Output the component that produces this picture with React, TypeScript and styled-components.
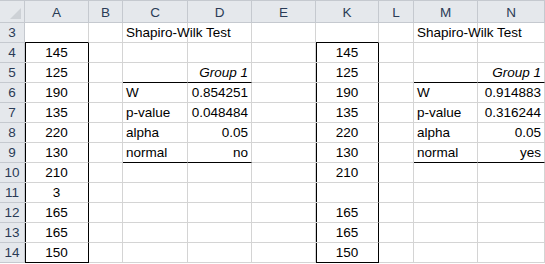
import React from 'react';
import styled, { createGlobalStyle } from 'styled-components';

const COLS = ['A', 'B', 'C', 'D', 'E', 'K', 'L', 'M', 'N'];
const WIDTHS = [25, 64, 34, 65, 64, 64, 63, 35, 64, 67];

type CellSpec = { text?: string; align?: 'left' | 'center' | 'right'; italic?: boolean };

const colA = ['145', '125', '190', '135', '220', '130', '210', '3', '165', '165', '150'];
const colK = ['145', '125', '190', '135', '220', '130', '210', '', '165', '165', '150'];

const leftTable: Record<number, [string, string]> = {
    3: ['Shapiro-Wilk Test', ''],
    5: ['', 'Group 1'],
    6: ['W', '0.854251'],
    7: ['p-value', '0.048484'],
    8: ['alpha', '0.05'],
    9: ['normal', 'no'],
};

const rightTable: Record<number, [string, string]> = {
    3: ['Shapiro-Wilk Test', ''],
    5: ['', 'Group 1'],
    6: ['W', '0.914883'],
    7: ['p-value', '0.316244'],
    8: ['alpha', '0.05'],
    9: ['normal', 'yes'],
};

const ROWS = [3, 4, 5, 6, 7, 8, 9, 10, 11, 12, 13, 14];

function cellFor(col: string, row: number): CellSpec {
    const idx = row - 4;
    if (col === 'A' && idx >= 0) return { text: colA[idx], align: 'center' };
    if (col === 'K' && idx >= 0) return { text: colK[idx], align: 'center' };
    const table = col === 'C' || col === 'D' ? leftTable : col === 'M' || col === 'N' ? rightTable : null;
    if (table && table[row]) {
        const isLabel = col === 'C' || col === 'M';
        const text = table[row][isLabel ? 0 : 1];
        if (!text) return {};
        if (row === 5) return { text, align: 'right', italic: true };
        return { text, align: isLabel ? 'left' : 'right' };
    }
    return {};
}

// black borders drawn over the grid
function edges(col: string, row: number) {
    const boxed = (col === 'A' || col === 'K') && row >= 4;
    const table = ['C', 'D', 'M', 'N'].includes(col);
    return {
        $boxLeft: boxed,
        $boxRight: boxed,
        $black: (boxed && row === 14) || ((col === 'A' || col === 'K') && row === 3) || (table && (row === 5 || row === 9)),
    };
}

function App() {
    return (
        <>
            <GlobalStyle />
            <Sheet>
                <Corner>
                    <CornerMark />
                </Corner>
                {COLS.map((c) => (
                    <ColHead key={c}>{c}</ColHead>
                ))}
                {ROWS.map((r) => (
                    <React.Fragment key={r}>
                        <RowHead>{r}</RowHead>
                        {COLS.map((c) => {
                            const spec = cellFor(c, r);
                            return (
                                <Cell key={c} $align={spec.align || 'left'} $italic={!!spec.italic} {...edges(c, r)}>
                                    {spec.text}
                                </Cell>
                            );
                        })}
                    </React.Fragment>
                ))}
            </Sheet>
        </>
    );
}

const GlobalStyle = createGlobalStyle`
    html, body {
        margin: 0;
        padding: 0;
        background: #ffffff;
        overflow: hidden;
    }
`;

const Sheet = styled.div`
    display: grid;
    grid-template-columns: ${WIDTHS.map((w) => `${w}px`).join(' ')};
    grid-template-rows: 22px repeat(12, 20px);
    width: 545px;
    border-top: 1px solid #c5c9cf;
    font-family: 'Liberation Sans', Arial, sans-serif;
    font-size: 13.5px;
    color: #000000;
`;

const Corner = styled.div`
    position: relative;
    background: #e5e8ec;
    border-right: 1px solid #c5c9cf;
    border-bottom: 1px solid #c5c9cf;
`;

const CornerMark = styled.div`
    position: absolute;
    right: 3px;
    bottom: 3px;
    width: 0;
    height: 0;
    border-left: 11px solid transparent;
    border-bottom: 11px solid #cdd1d6;
`;

const ColHead = styled.div`
    display: flex;
    align-items: center;
    justify-content: center;
    padding-top: 1px;
    background: #e5e8ec;
    border-right: 1px solid #c5c9cf;
    border-bottom: 1px solid #c5c9cf;
    color: #2a3b56;
`;

const RowHead = styled.div`
    display: flex;
    align-items: flex-end;
    justify-content: center;
    padding-bottom: 2px;
    background: #e5e8ec;
    border-right: 1px solid #c5c9cf;
    border-bottom: 1px solid #c5c9cf;
    color: #2a3b56;
`;

const Cell = styled.div<{ $align: string; $italic: boolean; $boxLeft: boolean; $boxRight: boolean; $black: boolean }>`
    display: flex;
    align-items: flex-end;
    justify-content: ${(p) => (p.$align === 'right' ? 'flex-end' : p.$align === 'center' ? 'center' : 'flex-start')};
    padding: 0 3px 2px 3px;
    white-space: nowrap;
    overflow: visible;
    min-width: 0;
    font-style: ${(p) => (p.$italic ? 'italic' : 'normal')};
    border-right: 1px solid ${(p) => (p.$boxRight ? '#000000' : '#d4d4d4')};
    border-bottom: 1px solid ${(p) => (p.$black ? '#000000' : '#d4d4d4')};
    box-shadow: ${(p) => (p.$boxLeft ? 'inset 1px 0 0 #000000' : 'none')};
`;

export default App;
